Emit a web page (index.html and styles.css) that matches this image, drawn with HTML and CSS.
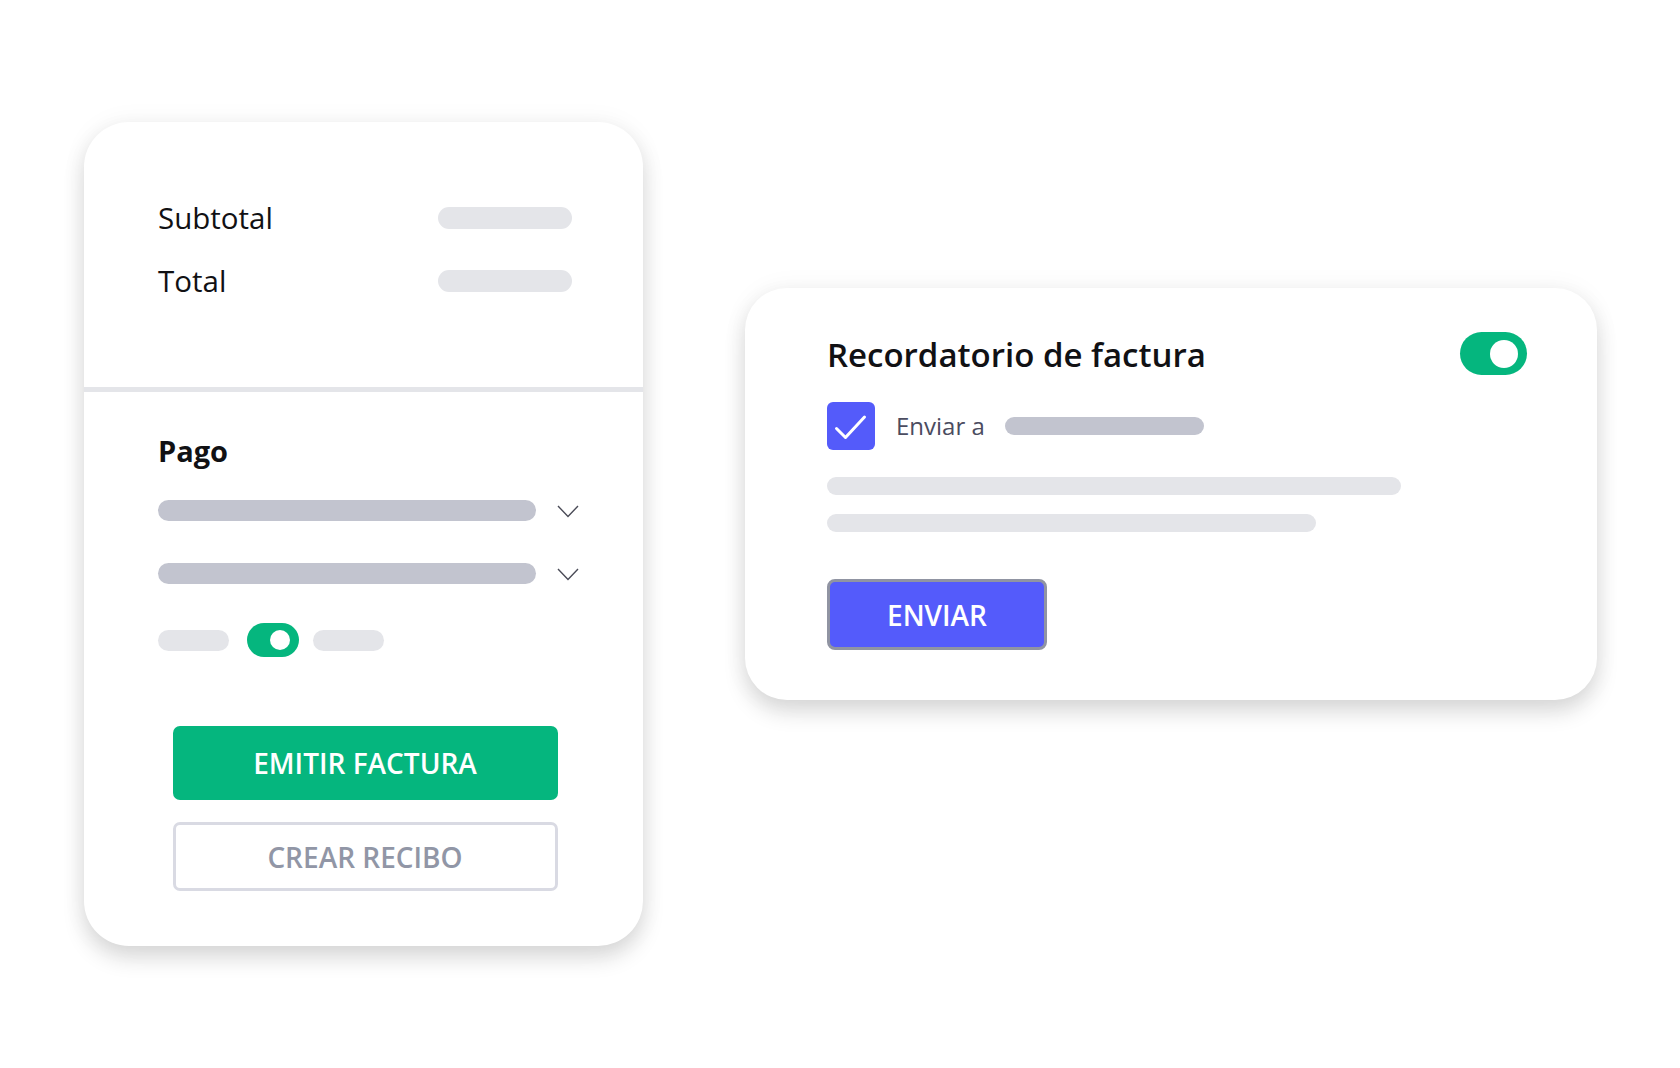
FILE: index.html
```html
<!DOCTYPE html>
<html lang="es">
<head>
<meta charset="utf-8">
<title>Factura</title>
<link rel="stylesheet" href="styles.css">
</head>
<body>
<div class="stage">
  <section class="card card-invoice">
    <div class="totals">
      <div class="total-row">
        <span class="total-label">Subtotal</span>
        <span class="pill pill-light pill-amount"></span>
      </div>
      <div class="total-row">
        <span class="total-label">Total</span>
        <span class="pill pill-light pill-amount"></span>
      </div>
    </div>
    <div class="divider"></div>
    <div class="payment">
      <h2 class="payment-title">Pago</h2>
      <div class="select-row">
        <span class="pill pill-dark pill-select"></span>
        <svg class="chevron" viewBox="0 0 22 13" width="22" height="13"><path d="M1 1 L11 11.5 L21 1" fill="none" stroke="#4a4b57" stroke-width="1.4"/></svg>
      </div>
      <div class="select-row select-row-2">
        <span class="pill pill-dark pill-select"></span>
        <svg class="chevron" viewBox="0 0 22 13" width="22" height="13"><path d="M1 1 L11 11.5 L21 1" fill="none" stroke="#4a4b57" stroke-width="1.4"/></svg>
      </div>
      <div class="switch-row">
        <span class="pill pill-light pill-small"></span>
        <span class="toggle toggle-small"><span class="knob"></span></span>
        <span class="pill pill-light pill-small"></span>
      </div>
      <div class="actions">
        <button class="btn btn-green">EMITIR FACTURA</button>
        <button class="btn btn-outline">CREAR RECIBO</button>
      </div>
    </div>
  </section>

  <section class="card card-reminder">
    <div class="reminder-head">
      <h2 class="reminder-title">Recordatorio de factura</h2>
      <span class="toggle toggle-large"><span class="knob"></span></span>
    </div>
    <div class="send-row">
      <span class="checkbox">
        <svg viewBox="0 0 48 48" width="48" height="48"><path d="M9.5 26.5 L18.5 35.5 L37.5 15" fill="none" stroke="#ffffff" stroke-width="3" stroke-linecap="round" stroke-linejoin="round"/></svg>
      </span>
      <span class="send-label">Enviar a</span>
      <span class="pill pill-dark pill-recipient"></span>
    </div>
    <div class="text-lines">
      <span class="pill pill-light line-long"></span>
      <span class="pill pill-light line-short"></span>
    </div>
    <button class="btn btn-blue">ENVIAR</button>
  </section>
</div>
</body>
</html>
```

FILE: styles.css
```css
* { box-sizing: border-box; }
html, body {
  margin: 0;
  padding: 0;
  background: #ffffff;
}
body {
  width: 1680px;
  height: 1068px;
  overflow: hidden;
  font-family: "Open Sans", "Noto Sans", sans-serif;
  color: #111114;
}
.stage {
  display: flex;
  align-items: flex-start;
  gap: 102px;
  padding: 122px 0 0 84px;
}
.card {
  background: #ffffff;
  box-shadow: 0 12px 22px rgba(0, 0, 0, 0.14), 0 0 26px rgba(0, 0, 0, 0.05);
}
.pill {
  display: block;
  flex-shrink: 0;
  border-radius: 12px;
}
.pill-light { background: #e4e5e9; }
.pill-dark { background: #c2c4cf; }

/* Left card */
.card-invoice {
  width: 559px;
  height: 824px;
  border-radius: 45px;
  overflow: hidden;
}
.totals {
  height: 265px;
  padding: 80px 71px 0 74px;
  display: flex;
  flex-direction: column;
  gap: 31px;
}
.total-row {
  display: flex;
  justify-content: space-between;
  align-items: center;
  height: 32px;
}
.total-label {
  font-size: 29.5px;
  line-height: 32px;
  font-weight: 400;
}
.pill-amount {
  width: 134px;
  height: 22px;
}
.divider {
  height: 5px;
  background: #e4e5e9;
}
.payment {
  padding: 41px 0 0 74px;
  display: flex;
  flex-direction: column;
}
.payment-title {
  margin: 0;
  font-size: 29px;
  line-height: 36px;
  font-weight: 700;
}
.select-row {
  display: flex;
  align-items: center;
  gap: 21px;
  margin-top: 31px;
  height: 21px;
}
.select-row-2 { margin-top: 42px; }
.pill-select {
  width: 378px;
  height: 21px;
}
.chevron { display: block; flex-shrink: 0; margin-top: 2px; }
.switch-row {
  display: flex;
  align-items: center;
  margin-top: 39px;
  height: 34px;
}
.pill-small {
  width: 71px;
  height: 21px;
}
.toggle {
  display: flex;
  align-items: center;
  justify-content: flex-end;
  flex-shrink: 0;
  background: #05b67e;
}
.toggle .knob {
  display: block;
  background: #ffffff;
  border-radius: 50%;
}
.toggle-small {
  width: 52px;
  height: 34px;
  border-radius: 17px;
  padding-right: 9px;
  margin: 0 14px 0 18px;
}
.toggle-small .knob { width: 20px; height: 20px; }
.actions {
  display: flex;
  flex-direction: column;
  align-items: center;
  gap: 22px;
  margin: 69px 0 0 -71px;
}
.btn {
  display: flex;
  align-items: center;
  justify-content: center;
  font-family: "Open Sans", "Noto Sans", sans-serif;
  font-size: 28px;
  font-weight: 600;
  letter-spacing: 0;
  padding: 0;
  cursor: pointer;
}
.btn-green {
  width: 385px;
  height: 74px;
  border: 0;
  border-radius: 7px;
  background: #05b67e;
  color: #ffffff;
}
.btn-outline {
  width: 385px;
  height: 69px;
  border: 3px solid #d9dae3;
  border-radius: 7px;
  background: #ffffff;
  color: #9196a6;
}

/* Right card */
.card-reminder {
  width: 852px;
  height: 412px;
  margin-top: 166px;
  border-radius: 42px;
  padding: 44px 70px 0 82px;
  display: flex;
  flex-direction: column;
  align-items: flex-start;
}
.reminder-head {
  align-self: stretch;
  display: flex;
  justify-content: space-between;
  align-items: center;
  height: 43px;
}
.reminder-title {
  margin: 3px 0 0 0;
  font-size: 33px;
  line-height: 40px;
  font-weight: 600;
}
.toggle-large {
  width: 67px;
  height: 43px;
  border-radius: 22px;
  padding-right: 9px;
}
.toggle-large .knob { width: 28px; height: 28px; }
.send-row {
  display: flex;
  align-items: center;
  margin-top: 27px;
  height: 48px;
}
.checkbox {
  display: block;
  width: 48px;
  height: 48px;
  border-radius: 6px;
  background: #545bfa;
}
.checkbox svg { display: block; }
.send-label {
  margin-left: 21px;
  font-size: 24px;
  line-height: 30px;
  color: #4b4c60;
}
.pill-recipient {
  margin-left: 20px;
  width: 199px;
  height: 18px;
  border-radius: 9px;
}
.text-lines {
  display: flex;
  flex-direction: column;
  gap: 19px;
  margin-top: 27px;
}
.line-long { width: 574px; height: 18px; border-radius: 9px; }
.line-short { width: 489px; height: 18px; border-radius: 9px; }
.btn-blue {
  margin-top: 47px;
  width: 220px;
  height: 71px;
  border: 3px solid #9094a2;
  border-radius: 8px;
  background: #545bfb;
  color: #ffffff;
}
```
